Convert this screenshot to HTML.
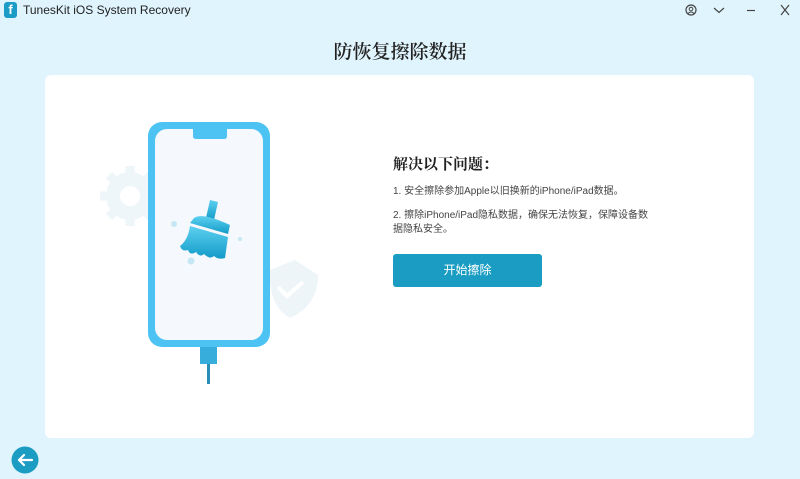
<!DOCTYPE html>
<html><head><meta charset="utf-8"><style>
body{margin:0;width:800px;height:479px;background:#e0f4fd;position:relative;overflow:hidden;font-family:"Liberation Sans","Noto Sans CJK SC",sans-serif;}
.abs{position:absolute}
.card{left:45px;top:75px;width:709px;height:363px;background:#fff;border-radius:6px}
</style></head><body>
<div class="abs" style="left:4px;top:2px;width:13px;height:16px;background:#1a9cc6;border-radius:3px;color:#fff;font-size:13px;line-height:16px;text-align:center;font-weight:bold">f</div>
<div class="abs" style="left:23px;top:3px;font-size:12px;color:#222">TunesKit iOS System Recovery</div>
<svg class="abs" style="left:684px;top:3px" width="110" height="14" viewBox="0 0 110 14">
<circle cx="7" cy="7" r="5" fill="none" stroke="#444" stroke-width="1.2"/><circle cx="7" cy="6" r="1.8" fill="none" stroke="#444"/><path d="M4 10.5 Q7 7.5 10 10.5" fill="none" stroke="#444"/>
<path d="M30 5 L35 9.5 L40 5" fill="none" stroke="#444" stroke-width="1.2"/>
<path d="M63 7.5 H71" stroke="#444" stroke-width="1.2"/>
<path d="M97 2 L105 12 M105 2 L97 12" stroke="#444" stroke-width="1.2"/>
</svg>
<div class="abs" style="left:0;width:800px;top:37px;text-align:center;font-size:19px;font-family:'Noto Serif CJK SC',serif;font-weight:600;color:#222">防恢复擦除数据</div>
<div class="abs card"></div>
<svg class="abs" style="left:90px;top:110px" width="250" height="280" viewBox="0 0 250 280">
<g fill="#eef6f9"><circle cx="40" cy="86" r="24"/><g stroke="#eef6f9" stroke-width="9"><path d="M40 56V116M10 86H70M19 65L61 107M61 65L19 107"/></g></g>
<circle cx="40" cy="86" r="10" fill="#fff"/>
<path d="M180 160 L205 150 L228 165 Q228 195 200 208 Q178 195 180 160Z" fill="#edf5f9"/>
<path d="M188 177 L197 186 L213 172" fill="none" stroke="#fff" stroke-width="4"/>
<rect x="58" y="12" width="122" height="225" rx="14" fill="#4cc3f2"/>
<rect x="65" y="19" width="108" height="211" rx="12" fill="#f5f8fd"/>
<path d="M103 19 H137 V26 Q137 29 134 29 H106 Q103 29 103 26Z" fill="#4cc3f2"/>
<rect x="110" y="237" width="17" height="17" fill="#36addb"/>
<rect x="117" y="254" width="3" height="20" fill="#2a8db5"/>
<circle cx="84" cy="114" r="3" fill="#c6e6f3"/><circle cx="150" cy="129" r="2" fill="#c6e6f3"/><circle cx="101" cy="151" r="3.5" fill="#c6e6f3"/>
<defs><linearGradient id="g" x1="0" y1="0" x2="0" y2="1"><stop offset="0" stop-color="#5dd0f0"/><stop offset="1" stop-color="#129bc8"/></linearGradient></defs>
<path d="M120 90 L128 92 L124 110 L116 108Z" fill="url(#g)"/>
<path d="M104 108 Q112 102 140 115 L138 124 L100 113Z" fill="url(#g)"/>
<path d="M100 116 L138 127 L135 148 Q128 150 124 146 Q120 150 114 144 Q110 148 106 142 Q100 146 98 140 Q92 142 90 136 Q98 130 100 116Z" fill="url(#g)"/>
</svg>
<div class="abs" style="left:393px;top:153px;font-size:15px;font-weight:bold;font-family:'Noto Serif CJK SC',serif;color:#222">解决以下问题：</div>
<div class="abs" style="left:393px;top:182px;font-size:10px;color:#444">1. 安全擦除参加Apple以旧换新的iPhone/iPad数据。</div>
<div class="abs" style="left:393px;top:209px;width:260px;font-size:10px;line-height:14px;color:#444">2. 擦除iPhone/iPad隐私数据，确保无法恢复，保障设备数据隐私安全。</div>
<div class="abs" style="left:393px;top:254px;width:149px;height:33px;background:#1b9dc3;border-radius:3px;color:#fff;font-size:12px;line-height:33px;text-align:center">开始擦除</div>
<svg class="abs" style="left:11px;top:446px" width="28" height="28" viewBox="0 0 28 28"><circle cx="14" cy="14" r="13.5" fill="#1b9dc3"/><path d="M21 14H8M13 9L8 14L13 19" fill="none" stroke="#fff" stroke-width="2.2" stroke-linecap="round" stroke-linejoin="round"/></svg>
</body></html>
